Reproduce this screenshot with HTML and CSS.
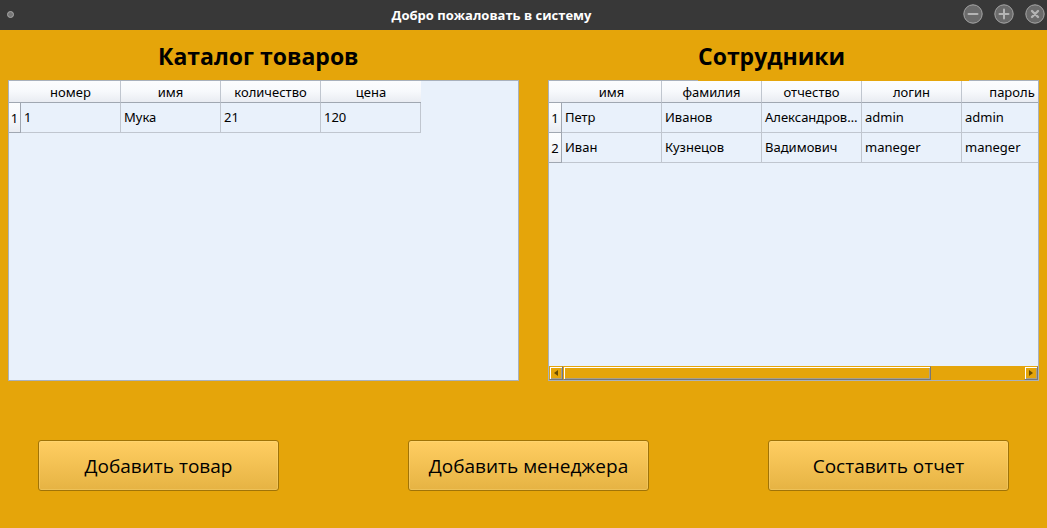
FILE: index.html
```
<!DOCTYPE html>
<html lang="ru">
<head>
<meta charset="utf-8">
<title>Добро пожаловать в систему</title>
<link rel="stylesheet" href="styles.css">
</head>
<body>
<header class="titlebar">
  <svg class="dot" width="9" height="9" viewBox="0 0 9 9"><circle cx="4.5" cy="4.5" r="3" fill="#777" stroke="#aaa"/></svg>
  <h1 class="window-title">Добро пожаловать в систему</h1>
  <div class="controls">
    <button class="control" aria-label="Свернуть"><svg width="20" height="20" viewBox="0 0 20 20"><circle cx="10" cy="10" r="9.2" fill="#6b6b6b" stroke="#a6a6a6"/><path d="M5.5 10h9" stroke="#b4b4b4" stroke-width="2" stroke-linecap="round"/></svg></button>
    <button class="control" aria-label="Развернуть"><svg width="20" height="20" viewBox="0 0 20 20"><circle cx="10" cy="10" r="9.2" fill="#6b6b6b" stroke="#a6a6a6"/><path d="M5.5 10h9M10 5.5v9" stroke="#b4b4b4" stroke-width="2" stroke-linecap="round"/></svg></button>
    <button class="control" aria-label="Закрыть"><svg width="20" height="20" viewBox="0 0 20 20"><circle cx="10" cy="10" r="9.2" fill="#6b6b6b" stroke="#a6a6a6"/><path d="M7 7l6 6M13 7l-6 6" stroke="#b4b4b4" stroke-width="2.4" stroke-linecap="round"/></svg></button>
  </div>
</header>
<main class="content">
  <div class="panels">
    <section class="section">
      <h2 class="heading">Каталог товаров</h2>
      <div class="view">
        <div class="viewport">
          <table class="grid">
            <colgroup><col class="col-index"><col class="col"><col class="col"><col class="col"><col class="col"></colgroup>
            <thead><tr><td class="corner"></td><th>номер</th><th>имя</th><th>количество</th><th>цена</th></tr></thead>
            <tbody><tr><th>1</th><td>1</td><td>Мука</td><td>21</td><td>120</td></tr></tbody>
          </table>
        </div>
      </div>
    </section>
    <section class="section">
      <h2 class="heading heading-cover">Сотрудники</h2>
      <div class="view">
        <div class="viewport">
          <table class="grid grid-wide">
            <colgroup><col class="col-index-wide"><col class="col"><col class="col"><col class="col"><col class="col"><col class="col"></colgroup>
            <thead><tr><td class="corner"></td><th>имя</th><th>фамилия</th><th>отчество</th><th>логин</th><th>пароль</th></tr></thead>
            <tbody>
              <tr><th>1</th><td>Петр</td><td>Иванов</td><td>Александрович</td><td>admin</td><td>admin</td></tr>
              <tr><th>2</th><td>Иван</td><td>Кузнецов</td><td>Вадимович</td><td>maneger</td><td>maneger</td></tr>
            </tbody>
          </table>
        </div>
        <div class="scrollbar">
          <button class="bevel arrow" aria-label="Прокрутить влево"><svg width="4" height="6" viewBox="0 0 4 6"><path d="M4 0v6L0 3z" fill="#6b4d00"/></svg></button>
          <div class="track"><div class="bevel thumb"></div></div>
          <button class="bevel arrow" aria-label="Прокрутить вправо"><svg width="4" height="6" viewBox="0 0 4 6"><path d="M0 0v6l4-3z" fill="#6b4d00"/></svg></button>
        </div>
      </div>
    </section>
  </div>
  <div class="actions">
    <button class="action">Добавить товар</button>
    <button class="action">Добавить менеджера</button>
    <button class="action">Составить отчет</button>
  </div>
</main>
</body>
</html>
```

FILE: styles.css
```
* { box-sizing: border-box; }
body {
  margin: 0;
  min-height: 100vh;
  background: #e5a50a;
  color: #000;
  font: 13px/18px "Noto Sans", "Open Sans", sans-serif;
}
button { margin: 0; padding: 0; border: 0; background: none; font: inherit; color: inherit; }
svg { display: block; }
.titlebar {
  display: grid;
  grid-template-columns: 1fr auto 1fr;
  align-items: center;
  height: 30px;
  padding: 0 2px 2px 6px;
  background: #383838;
}
.window-title {
  margin: 0;
  padding-right: 68px;
  padding-top: 1px;
  font-family: "Open Sans", "Noto Sans", sans-serif;
  font-size: 13px;
  font-weight: 700;
  color: #fff;
}
.controls { display: flex; gap: 11px; justify-content: flex-end; }
.content { padding: 10px 8px; }
.panels { display: grid; grid-template-columns: 511fr 491fr; gap: 29px; }
.section { min-width: 0; }
.heading {
  height: 40px;
  margin: 0 0 0 150px;
  font-family: "Open Sans", "Noto Sans", sans-serif;
  font-size: 23px;
  line-height: 32px;
  font-weight: 700;
}
.heading-cover {
  position: relative;
  width: 271px;
  height: 41px;
  margin-bottom: -1px;
  background: #e5a50a;
}
.view {
  display: flex;
  flex-direction: column;
  height: 301px;
  border: 1px solid #a9b1bc;
  background: #e9f1fb;
}
.viewport { flex: 1; overflow: hidden; }
.grid { width: 412px; table-layout: fixed; border-collapse: separate; border-spacing: 0; }
.grid-wide { width: 513px; }
.col-index { width: 12px; }
.col-index-wide { width: 13px; }
.col { width: 100px; }
.grid th { padding: 0; font-weight: 400; text-align: center; }
.grid thead th, .corner {
  height: 22px;
  border-right: 1px solid #c0c6cf;
  border-bottom: 1px solid #a0a7b1;
  background: linear-gradient(#fcfdfe, #f7f9fc 50%, #e9ecf2);
}
.grid thead .corner, .grid thead th:last-child { border-right: 0; }
.grid tbody th {
  height: 30px;
  border-right: 1px solid #a0a7b1;
  border-bottom: 1px solid #a0a7b1;
  background: linear-gradient(#fcfdfe, #f7f9fc 50%, #e9ecf2);
}
.grid tbody td {
  height: 30px;
  padding: 0 3px 2px;
  border-right: 1px solid #c0c6cf;
  border-bottom: 1px solid #c0c6cf;
  overflow: hidden;
  text-overflow: ellipsis;
  white-space: nowrap;
}
.scrollbar { display: flex; height: 14px; background: #e5a50a; }
.bevel {
  border: 1px solid;
  border-color: #e5a50a #777 #777 #e5a50a;
  box-shadow: inset 1px 1px #fff, inset -1px -1px #aaa08a;
}
.arrow { display: grid; place-items: center; width: 14px; }
.track { flex: 1; }
.thumb { width: calc(80% - 1px); height: 14px; }
.actions { display: grid; grid-template-columns: 370fr 360fr 241px; padding: 59px 30px 0; }
.action {
  width: 241px;
  height: 51px;
  border: 1px solid #a07307;
  border-radius: 3px;
  background: linear-gradient(#ffce62, #e6b343);
  box-shadow: inset 0 0 0 1px rgba(255, 225, 140, 0.3);
  font-family: "Open Sans", "Noto Sans", sans-serif;
  font-size: 19px;
}
```
